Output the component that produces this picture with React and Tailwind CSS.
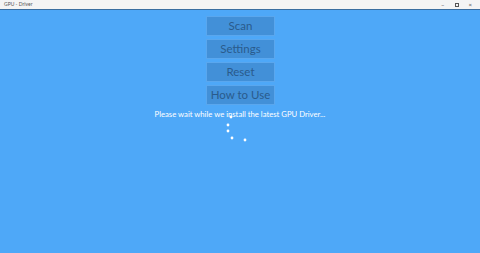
const buttons = ['Scan', 'Settings', 'Reset', 'How to Use'];

const Spinner = () => {
  const dots = [
    [11, 4],
    [8, 12],
    [8, 18],
    [12, 25],
    [25, 27],
  ];
  return (
    <svg width="34" height="32" viewBox="0 0 34 32" className="block">
      {dots.map(([cx, cy], i) => (
        <circle key={i} cx={cx} cy={cy} r="1.4" fill="#ffffff" />
      ))}
    </svg>
  );
};

const App = () => {
  return (
    <div className="flex flex-col w-[480px] h-[253px] bg-[#4ea8f8] font-['Lato',sans-serif] overflow-hidden">
      {/* Title bar */}
      <div className="flex items-center justify-between h-[10px] bg-[#f4f4f4] border-b border-[#3a6ea0] px-1">
        <span className="text-[5px] leading-none text-[#555]">GPU - Driver</span>
        <div className="flex items-center gap-[10px] pr-[4px] text-[6px] leading-none text-[#444]">
          <span>&#8211;</span>
          <span className="inline-block w-[4px] h-[4px] border border-[#555]" />
          <span>&#215;</span>
        </div>
      </div>

      {/* Content */}
      <div className="flex flex-col items-center pt-[6px]">
        <div className="flex flex-col gap-[3px] ml-[1px]">
          {buttons.map((label) => (
            <button
              key={label}
              className="w-[69px] h-[20px] bg-[#4290d8] border border-[#5aa7ee] text-[11.5px] leading-none whitespace-nowrap text-[#2a5b8c]"
            >
              {label}
            </button>
          ))}
        </div>
        <p className="mt-[3px] text-[7.7px] leading-[12px] whitespace-nowrap text-white">
          Please wait while we install the latest GPU Driver...
        </p>
        <div className="-mt-[7px] -ml-[6px]">
          <Spinner />
        </div>
      </div>
    </div>
  );
};

export default App;
